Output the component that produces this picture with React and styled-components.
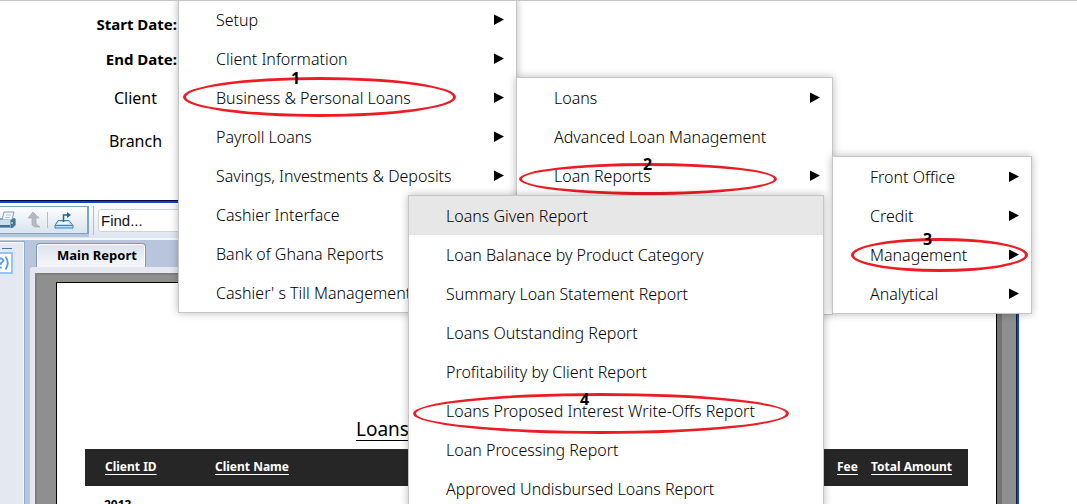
import React from 'react';
import styled, { createGlobalStyle, css } from 'styled-components';

const GlobalStyle = createGlobalStyle`
  * { box-sizing: border-box; }
  body { margin: 0; background: #fff; color: #000; font-family: "Open Sans", "Noto Sans", sans-serif; }
  ul { list-style: none; margin: 0; padding: 0; }
`;

const Screen = styled.div`
  position: relative;
  display: flex;
  flex-direction: column;
  height: 100vh;
  overflow: hidden;
  border-top: 1px solid #c4c4c4;
`;

const Filters = styled.section`
  display: grid;
  grid-template-columns: 177px;
  grid-template-rows: 46px 24px 54px 32px;
  align-items: center;
  height: 199px;
  flex: none;
`;

const FilterName = styled.div`
  font-family: "Noto Sans", sans-serif;
  font-size: 16px;
  line-height: 20px;
  padding-left: 94px;
  text-align: ${(p) => (p.$strong ? 'right' : 'center')};
  ${(p) => p.$strong && css`
    font-size: 15px;
    font-weight: 700;
    padding-left: 0;
  `}
`;

const Viewer = styled.section`
  flex: 1;
  display: flex;
  flex-direction: column;
  min-height: 0;
  margin-right: 58px;
  border-top: 1px solid #000a3c;
  border-right: 2px solid #0f45d8;
  background: #b8c5dc;
  box-shadow: inset 0 2px #1141cf, inset -1px 0 #10203c;
`;

const Toolbar = styled.div`
  display: flex;
  align-items: flex-start;
  gap: 4px;
  height: 37px;
  flex: none;
  margin-top: 2px;
  padding-top: 3px;
  margin-right: 1px;
  background: linear-gradient(#fbfcfe, #e9eef6 70%, #dde5f0);
  border-bottom: 2px solid #f4f7fb;
`;

const ToolGroup = styled.div`
  display: flex;
  align-items: center;
  width: 89px;
  height: 28px;
  border: 1px solid #7fa4c6;
  border-left: 0;
  border-right-width: 2px;
  background: linear-gradient(#fdfefe, #d9e3ef);
  box-shadow: 0 3px #b9c6da;
`;

const ToolButton = styled.button`
  display: flex;
  flex: none;
  padding: 0;
  border: 0;
  background: none;
`;

const Divider = styled.span`
  width: 1px;
  height: ${(p) => p.$height}px;
  margin: 0 ${(p) => p.$gap}px;
  background: #b3bccd;
`;

const FindInput = styled.input`
  width: 160px;
  height: 23px;
  margin-top: 3px;
  padding: 0 2px;
  border: 1px solid #cdd3dc;
  border-radius: 3px;
  background: #fff;
  font: 15px/20px "Liberation Sans", sans-serif;
  color: #000;
  &::placeholder { color: #111; opacity: 1; }
`;

const Workspace = styled.div`
  display: flex;
  flex: 1;
  min-height: 0;
  margin-right: 1px;
`;

const SidePanel = styled.aside`
  width: 25px;
  flex: none;
  margin-top: 1px;
  padding-top: 6px;
  border-top: 1px solid #8fa5c8;
  border-right: 1px solid #8fa9cf;
  background: #e3e8f1;
  box-shadow: inset 0 1px #fff, inset -1px 0 #f7f9fc;
`;

const Dash = styled.div`
  width: 10px;
  height: 1px;
  margin: 0 0 3px 2px;
  background: #4f7687;
`;

const HelpButton = styled.button`
  display: flex;
  justify-content: flex-end;
  width: 13px;
  height: 22px;
  padding: 0;
  border: 2px solid #94c4fb;
  border-left: 0;
  background: #fff;
`;

const ReportPane = styled.div`
  flex: 1;
  min-width: 0;
  display: flex;
  flex-direction: column;
  padding-left: 5px;
`;

const Tab = styled.button`
  align-self: flex-start;
  width: 110px;
  height: 24px;
  flex: none;
  margin: 3px 0 0 6px;
  padding: 0 0 2px 12px;
  border: 1px solid #7e97bf;
  border-bottom: 0;
  border-radius: 4px 4px 0 0;
  background: linear-gradient(#dbe2ed, #f6f8fb);
  box-shadow: inset 1px 1px #fff, inset -1px 0 #fff;
  font: 700 13px/20px "Noto Sans", sans-serif;
  color: #000;
`;

const Canvas = styled.div`
  flex: 1;
  min-height: 0;
  padding: 9px 19px 0 21px;
  border-top: 6px solid #e6e8f1;
  border-left: 5px solid #e6e6f0;
  border-top-left-radius: 3px;
  background: #8f8f8f;
  box-shadow: inset 2px 2px #7e7e7e;
`;

const Paper = styled.article`
  height: 100%;
  border: 1px solid #000;
  border-bottom: 0;
  background: #fff;
  box-shadow: 5px 4px #737373;
  padding: 132px 28px 0 28px;
`;

const ReportTitle = styled.h1`
  margin: 0 0 6px;
  padding-left: 271px;
  font: 400 19px/28px "Noto Sans", sans-serif;
  text-decoration: underline;
  text-underline-offset: 4px;
  text-decoration-thickness: 1px;
`;

const ReportTable = styled.table`
  width: 100%;
  table-layout: fixed;
  border-collapse: collapse;
  font: 700 12px/16px "Noto Sans", sans-serif;
  text-align: left;
`;

const Heading = styled.th`
  width: ${(p) => p.$width};
  height: 37px;
  padding: 0 0 2px ${(p) => p.$indent || 0}px;
  background: #262626;
  color: #fff;
  white-space: nowrap;
  text-decoration: underline;
  text-underline-offset: 3px;
`;

const Cell = styled.td`
  padding: 11px 0 0 19px;
`;

const Menu = styled.ul`
  position: absolute;
  left: ${(p) => p.$left}px;
  top: ${(p) => p.$top}px;
  width: ${(p) => p.$width}px;
  min-height: ${(p) => p.$minHeight || 0}px;
  border: 1px solid #c6c6c6;
  background: #fff;
  box-shadow: 0 0 8px rgba(0, 0, 0, 0.28);
`;

const Item = styled.li`
  position: relative;
  background: ${(p) => (p.$active ? '#e7e7e7' : 'transparent')};
`;

const ItemButton = styled.button`
  display: flex;
  align-items: center;
  justify-content: space-between;
  width: 100%;
  height: 39px;
  padding: 0 12px 0 37px;
  border: 0;
  background: none;
  color: #000;
  font: 300 16px/20px "Noto Sans", sans-serif;
  text-align: left;
  white-space: nowrap;
`;

const Mark = styled.div`
  position: absolute;
  left: ${(p) => p.$left}px;
  top: ${(p) => p.$top}px;
  width: ${(p) => p.$width}px;
  height: ${(p) => p.$height}px;
  border: 3px solid #ed1c24;
  border-radius: 50%;
  pointer-events: none;
`;

const MarkNumber = styled.span`
  position: absolute;
  left: ${(p) => p.$left}px;
  top: ${(p) => p.$top}px;
  font: 700 16px/14px "Noto Sans", sans-serif;
  pointer-events: none;
`;

const Arrow = () => (
  <svg width="10" height="12" viewBox="0 0 10 12" aria-hidden="true">
    <path d="M0 0.5 10 5.5 0 11Z" fill="#000" />
  </svg>
);

const PrintIcon = () => (
  <svg width="18" height="22" viewBox="0 0 18 22" aria-hidden="true">
    <path d="M0 9h13l3 1v6l-3 3H0z" fill="#7fa3c8" />
    <path d="M4 3h10l-2 8H2z" fill="#f1f6fb" stroke="#7f99b8" />
    <path d="M6 6h5M5 8.500h5" stroke="#b4c2d3" />
    <path d="M0 11h10v5H0z" fill="#cfdeec" />
    <path d="M11 11l4-2v7l-3 3h-1z" fill="#44729f" />
    <path d="M0 16h10v2H0z" fill="#416f9d" />
    <path d="M11 13h2v2h-2z" fill="#83dc58" />
  </svg>
);

const UpIcon = () => (
  <svg width="14" height="20" viewBox="0 0 14 20" aria-hidden="true">
    <path d="M6 2 12 8H9v6l4 3H8l-3-2V8H1z" fill="#b5b9c4" stroke="#a5a9b5" strokeWidth="0.7" />
  </svg>
);

const ExportIcon = () => (
  <svg width="20" height="20" viewBox="0 0 20 20" aria-hidden="true">
    <path d="M4 10.500h11l4 5V18H1v-2.500z" fill="#b9ddf5" stroke="#3f83b8" />
    <path d="M1 15.500h18" stroke="#3f83b8" />
    <path d="M5 12h9l1 2H4z" fill="#fff" />
    <path d="M9.500 12V5H15" fill="none" stroke="#1d699f" strokeWidth="1.500" />
    <path d="M13 2v6l4-3z" fill="#1d699f" />
  </svg>
);

const HelpIcon = () => (
  <svg width="12" height="18" viewBox="0 0 12 18" aria-hidden="true">
    <path d="M-1 5Q1 3 3 5T1 9v2M1 13v2" fill="none" stroke="#4c9df0" strokeWidth="2" />
    <path d="M6 2q5 7 0 14" fill="none" stroke="#4c9df0" strokeWidth="2" />
  </svg>
);

const menus = [
  {
    name: 'Main', left: 178, top: -2, width: 339,
    items: [
      ['Setup', true],
      ['Client Information', true],
      ['Business & Personal Loans', true, { n: 1, x: 112, y: -7, left: 4, top: -1, width: 273, height: 40 }],
      ['Payroll Loans', true],
      ['Savings, Investments & Deposits', true],
      ['Cashier Interface'],
      ['Bank of Ghana Reports'],
      ["Cashier' s Till Management"],
    ],
  },
  {
    name: 'Business & Personal Loans', left: 516, top: 76, width: 317, minHeight: 238,
    items: [
      ['Loans', true],
      ['Advanced Loan Management'],
      ['Loan Reports', true, { n: 2, x: 126, y: 1, left: 2, top: 7, width: 258, height: 32 }],
    ],
  },
  {
    name: 'Loan Reports', left: 832, top: 155, width: 200,
    items: [
      ['Front Office', true],
      ['Credit', true],
      ['Management', true, { n: 3, x: 90, y: -3, left: 18, top: 3, width: 177, height: 34 }],
      ['Analytical', true],
    ],
  },
  {
    name: 'Management', left: 408, top: 194, width: 416,
    items: [
      ['Loans Given Report'],
      ['Loan Balanace by Product Category'],
      ['Summary Loan Statement Report'],
      ['Loans Outstanding Report'],
      ['Profitability by Client Report'],
      ['Loans Proposed Interest Write-Offs Report', false, { n: 4, x: 171, y: 1, left: 4, top: 2, width: 376, height: 41 }],
      ['Loan Processing Report'],
      ['Approved Undisbursed Loans Report'],
    ],
    activeIndex: 0,
  },
];

function MenuPanel({ menu }) {
  return (
    <Menu aria-label={menu.name} $left={menu.left} $top={menu.top} $width={menu.width} $minHeight={menu.minHeight}>
      {menu.items.map(([label, hasChildren, mark], i) => (
        <Item key={label} $active={i === menu.activeIndex}>
          <ItemButton type="button">
            {label}
            {hasChildren && <Arrow />}
          </ItemButton>
          {mark && (
            <>
              <Mark $left={mark.left} $top={mark.top} $width={mark.width} $height={mark.height} />
              <MarkNumber $left={mark.x} $top={mark.y}>{mark.n}</MarkNumber>
            </>
          )}
        </Item>
      ))}
    </Menu>
  );
}

export default function App() {
  return (
    <Screen>
      <GlobalStyle />
      <Filters>
        <FilterName $strong>Start Date:</FilterName>
        <FilterName $strong>End Date:</FilterName>
        <FilterName>Client</FilterName>
        <FilterName>Branch</FilterName>
      </Filters>
      <Viewer>
        <Toolbar>
          <ToolGroup>
            <ToolButton type="button" aria-label="Print"><PrintIcon /></ToolButton>
            <Divider $height={0} $gap={4} />
            <ToolButton type="button" aria-label="Parent group"><UpIcon /></ToolButton>
            <Divider $height={16} $gap={6} />
            <ToolButton type="button" aria-label="Export"><ExportIcon /></ToolButton>
          </ToolGroup>
          <Divider $height={29} $gap={0} />
          <FindInput aria-label="Find" placeholder="Find..." />
        </Toolbar>
        <Workspace>
          <SidePanel>
            <Dash />
            <HelpButton type="button" aria-label="Help"><HelpIcon /></HelpButton>
          </SidePanel>
          <ReportPane>
            <Tab type="button">Main Report</Tab>
            <Canvas>
              <Paper>
                <ReportTitle>Loans</ReportTitle>
                <ReportTable>
                  <thead>
                    <tr>
                      <Heading $width="130px" $indent={20}>Client ID</Heading>
                      <Heading>Client Name</Heading>
                      <Heading $width="34px">Fee</Heading>
                      <Heading $width="97px">Total Amount</Heading>
                    </tr>
                  </thead>
                  <tbody>
                    <tr>
                      <Cell colSpan={4}>2013</Cell>
                    </tr>
                  </tbody>
                </ReportTable>
              </Paper>
            </Canvas>
          </ReportPane>
        </Workspace>
      </Viewer>
      <nav aria-label="Reports menu">
        {menus.map((menu) => <MenuPanel key={menu.name} menu={menu} />)}
      </nav>
    </Screen>
  );
}
